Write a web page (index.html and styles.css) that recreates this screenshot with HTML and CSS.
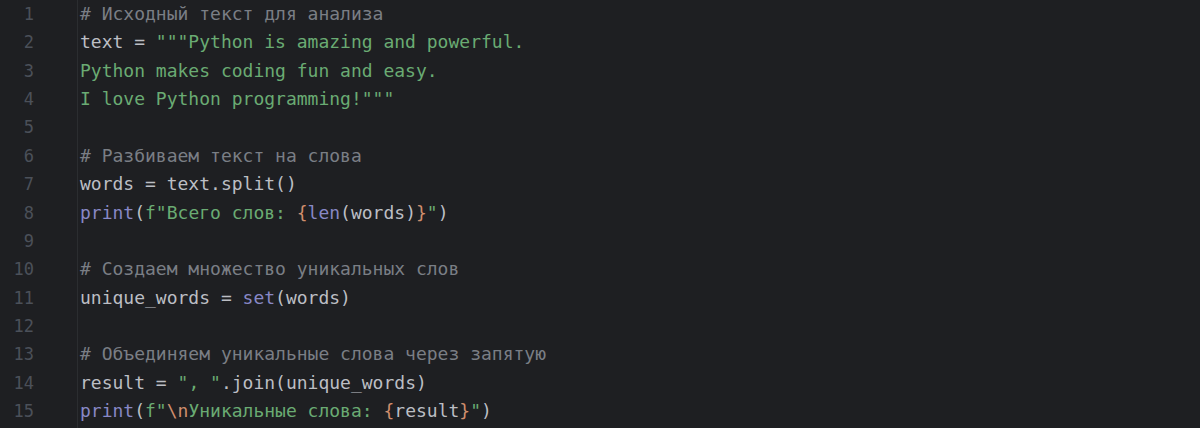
FILE: index.html
```html
<!DOCTYPE html>
<html lang="ru">
<head>
<meta charset="utf-8">
<link rel="stylesheet" href="styles.css">
</head>
<body>
<div class="editor">
  <div class="gutter">
    <div class="ln">1</div><div class="ln">2</div><div class="ln">3</div><div class="ln">4</div><div class="ln">5</div>
    <div class="ln">6</div><div class="ln">7</div><div class="ln">8</div><div class="ln">9</div><div class="ln">10</div>
    <div class="ln">11</div><div class="ln">12</div><div class="ln">13</div><div class="ln">14</div><div class="ln">15</div>
  </div>
  <div class="sep"></div>
  <div class="code">
    <div class="line"><span class="c"># Исходный текст для анализа</span></div>
    <div class="line">text = <span class="s">"""Python is amazing and powerful.</span></div>
    <div class="line"><span class="s">Python makes coding fun and easy.</span></div>
    <div class="line"><span class="s">I love Python programming!"""</span></div>
    <div class="line"></div>
    <div class="line"><span class="c"># Разбиваем текст на слова</span></div>
    <div class="line">words = text.split()</div>
    <div class="line"><span class="b">print</span>(<span class="s">f"Всего слов: </span><span class="k">{</span><span class="b">len</span>(words)<span class="k">}</span><span class="s">"</span>)</div>
    <div class="line"></div>
    <div class="line"><span class="c"># Создаем множество уникальных слов</span></div>
    <div class="line">unique_words = <span class="b">set</span>(words)</div>
    <div class="line"></div>
    <div class="line"><span class="c"># Объединяем уникальные слова через запятую</span></div>
    <div class="line">result = <span class="s">", "</span>.join(unique_words)</div>
    <div class="line"><span class="b">print</span>(<span class="s">f"</span><span class="k">\n</span><span class="s">Уникальные слова: </span><span class="k">{</span>result<span class="k">}</span><span class="s">"</span>)</div>
  </div>
</div>
</body>
</html>
```

FILE: styles.css
```css
html, body {
  margin: 0;
  padding: 0;
  background: #1e1f22;
}
.editor {
  display: flex;
  width: 1200px;
  height: 428px;
  overflow: hidden;
  background: #1e1f22;
  font-family: "DejaVu Sans Mono", "Liberation Mono", monospace;
  font-size: 18px;
  color: #bcbec4;
}
.gutter {
  width: 34px;
  flex: none;
}
.ln {
  height: 28.36px;
  line-height: 28.36px;
  text-align: right;
  color: #4b5059;
  font-size: 17px;
}
.sep {
  width: 1px;
  flex: none;
  margin-left: 43px;
  background: #2b2d30;
}
.code {
  padding-left: 2px;
}
.line {
  height: 28.36px;
  line-height: 28.36px;
  white-space: pre;
}
.c { color: #7a7e85; }
.s { color: #6aab73; }
.b { color: #8888c6; }
.k { color: #cf8e6d; }
```
